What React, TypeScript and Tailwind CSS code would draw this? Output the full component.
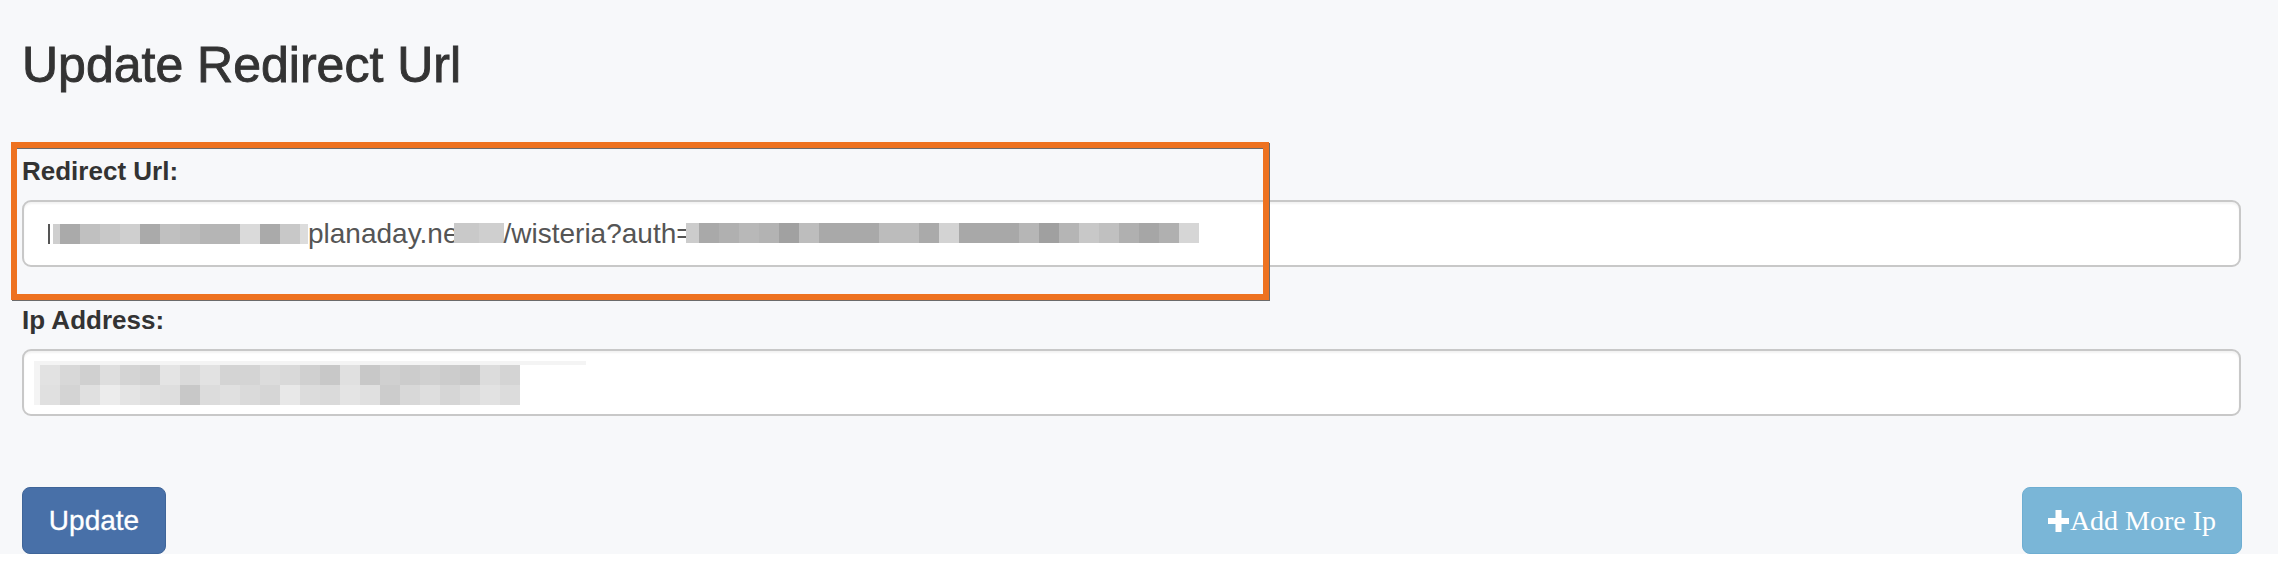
type Block = [number, string];

const urlLead: Block[] = [
  [7, '#cfcfcf'], [20, '#aaaaaa'], [20, '#c0c0c0'], [20, '#c8c8c8'], [20, '#cfcfcf'],
  [20, '#aaaaaa'], [20, '#c0c0c0'], [20, '#bcbcbc'], [20, '#b5b5b5'], [20, '#b5b5b5'],
  [20, '#dadada'], [20, '#aaaaaa'], [20, '#c8c8c8'], [8, '#dcdcdc'],
];

const urlMid: Block[] = [[25, '#c9c9c9'], [25, '#cfcfcf']];

const urlTail: Block[] = [
  [13, '#cccccc'], [20, '#a9a9a9'], [20, '#b0b0b0'], [20, '#b8b8b8'], [20, '#b3b3b3'],
  [20, '#a1a1a1'], [20, '#bdbdbd'], [20, '#a9a9a9'], [20, '#a9a9a9'], [20, '#a9a9a9'],
  [20, '#bcbcbc'], [20, '#bcbcbc'], [20, '#aaaaaa'], [20, '#d3d3d3'], [20, '#a8a8a8'],
  [20, '#a8a8a8'], [20, '#a8a8a8'], [20, '#b6b6b6'], [20, '#a0a0a0'], [20, '#b5b5b5'],
  [20, '#c8c8c8'], [20, '#c0c0c0'], [20, '#b0b0b0'], [20, '#a6a6a6'], [20, '#b0b0b0'],
  [20, '#d6d6d6'],
];

const ipTop = [
  '#e2e2e2', '#d8d8d8', '#d0d0d0', '#dedede', '#d4d4d4', '#d0d0d0', '#e4e4e4', '#dadada',
  '#e2e2e2', '#d4d4d4', '#d4d4d4', '#dcdcdc', '#d9d9d9', '#d0d0d0', '#c8c8c8', '#e0e0e0',
  '#c8c8c8', '#d0d0d0', '#cccccc', '#d0d0d0', '#cccccc', '#c8c8c8', '#dcdcdc', '#d4d4d4',
];

const ipBottom = [
  '#e0e0e0', '#d4d4d4', '#e0e0e0', '#ececec', '#e4e4e4', '#e0e0e0', '#dedede', '#c8c8c8',
  '#dcdcdc', '#e0e0e0', '#dadada', '#d6d6d6', '#e8e8e8', '#dcdcdc', '#dadada', '#e4e4e4',
  '#e0e0e0', '#cccccc', '#d8d8d8', '#dedede', '#d6d6d6', '#dcdcdc', '#e2e2e2', '#dcdcdc',
];

const Pixels = ({ blocks }: { blocks: Block[] }) => (
  <span className="inline-flex h-[20px] items-stretch">
    {blocks.map(([w, c], i) => (
      <span key={i} className="h-[20px]" style={{ width: w, backgroundColor: c }} />
    ))}
  </span>
);

const PixelRow = ({ colors }: { colors: string[] }) => (
  <div className="flex">
    {colors.map((c, i) => (
      <div key={i} className="h-[20px] w-[20px]" style={{ backgroundColor: c }} />
    ))}
  </div>
);

const fieldBox =
  'flex h-[67px] w-full items-center rounded-[9px] border-2 border-[#c8c8c8] bg-white shadow-[inset_0_2px_2px_rgba(0,0,0,0.05)]';

const labelCls = 'mb-[10px] text-[26px] font-bold leading-[37px] text-[#333]';

export default function App() {
  return (
    <div className="relative bg-[#f7f8fa] pl-[22px] pr-[37px] pt-[38px] font-['Liberation_Sans',Arial,sans-serif]">
      <h1 className="text-[50px] font-normal leading-[55px] text-[#333] [-webkit-text-stroke:0.9px_#333]">
        Update Redirect Url
      </h1>

      <div className="mt-[60px]">
        <label className={labelCls + ' block'}>Redirect Url:</label>
        <div className={fieldBox + ' pl-[24px]'}>
          <div className="flex items-end text-[28px] leading-[20px] text-[#555]">
            <span className="mr-[3px] h-[20px] w-[2px] bg-[#555]" />
            <Pixels blocks={urlLead} />
            <span className="whitespace-pre leading-[20px]">planaday.ne</span>
            <span className="-ml-[5px]">
              <Pixels blocks={urlMid} />
            </span>
            <span className="whitespace-pre leading-[20px]">/wisteria?auth=</span>
            <span className="-ml-[7px]">
              <Pixels blocks={urlTail} />
            </span>
          </div>
        </div>
      </div>

      <div className="mt-[35px]">
        <label className={labelCls + ' block'}>Ip Address:</label>
        <div className={fieldBox + ' pl-[10px]'}>
          <div className="flex flex-col">
            <div className="h-[4px] w-[552px] bg-[#f4f4f4]" />
            <div className="flex">
              <div className="w-[6px] bg-[#f4f4f4]" />
              <div className="flex flex-col">
                <PixelRow colors={ipTop} />
                <PixelRow colors={ipBottom} />
              </div>
            </div>
          </div>
        </div>
      </div>

      <div className="mt-[71px] flex items-center justify-between">
        <button
          type="button"
          className="flex h-[67px] w-[144px] items-center justify-center rounded-[8px] border border-[#3f6599] bg-[#4870a8] text-[28px] text-white [-webkit-text-stroke:0.3px_#fff]"
        >
          Update
        </button>
        <button
          type="button"
          className="mr-[-1px] flex h-[67px] w-[220px] items-center justify-center rounded-[8px] border border-[#6eaed2] bg-[#7ab6d7] font-['Liberation_Serif','Times_New_Roman',serif] text-[28px] text-white"
        >
          <svg width="21" height="22" viewBox="0 0 21 22" className="mr-[1px]">
            <path d="M7.5 0h6v8h7.5v6H13.5v8h-6v-8H0V8h7.5z" fill="white" />
          </svg>
          Add More Ip
        </button>
      </div>

      <div className="pointer-events-none absolute left-[11px] top-[142px] h-[158px] w-[1258px] border-[6px] border-[#ee7220] shadow-[1px_1px_0_#6b6b6b,inset_0_1px_0_#6b6b6b]" />
    </div>
  );
}
